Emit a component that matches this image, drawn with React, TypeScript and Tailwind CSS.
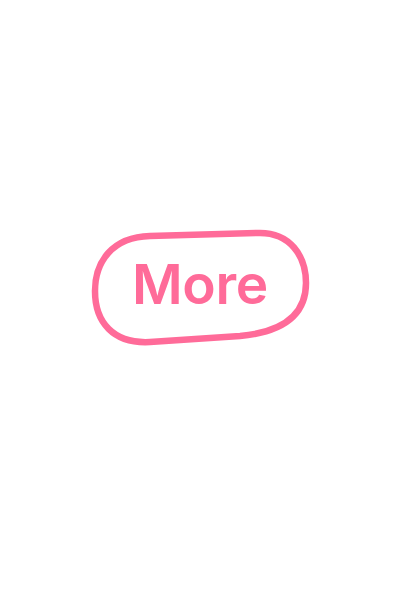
export default function App() {
  return (
    <div className="flex h-[600px] w-[400px] justify-center bg-white pt-[227px]">
      <button
        type="button"
        className="relative flex h-[122px] w-[224px] items-center justify-center pb-[8px]"
      >
        {/* hand-drawn outline */}
        <svg
          className="absolute inset-0 h-full w-full"
          viewBox="88 227 224 122"
          fill="none"
          aria-hidden="true"
        >
          <path
            d="M150 236 L258 233 C290 232 306 256 306 283 C306 315 283 332 240 336 L150 342 C113 344 95 322 95 291 C95 262 112 237 150 236 Z"
            stroke="#ff6b99"
            strokeWidth="6.5"
            strokeLinejoin="round"
          />
        </svg>
        <span className="relative font-['Inter',sans-serif] text-[55px] font-semibold leading-none tracking-[-0.3px] text-[#ff6b99]">
          More
        </span>
      </button>
    </div>
  );
}
